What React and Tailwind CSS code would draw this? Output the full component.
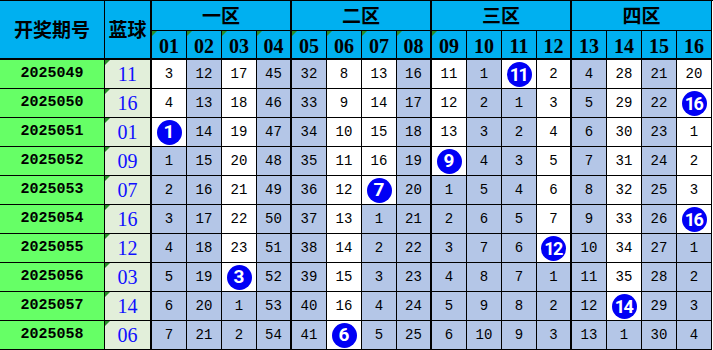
import React from 'react';

const rows = [
  { id: '2025049', blue: '11', nums: [3, 12, 17, 45, 32, 8, 13, 16, 11, 1, 'B11', 2, 4, 28, 21, 20] },
  { id: '2025050', blue: '16', nums: [4, 13, 18, 46, 33, 9, 14, 17, 12, 2, 1, 3, 5, 29, 22, 'B16'] },
  { id: '2025051', blue: '01', nums: ['B1', 14, 19, 47, 34, 10, 15, 18, 13, 3, 2, 4, 6, 30, 23, 1] },
  { id: '2025052', blue: '09', nums: [1, 15, 20, 48, 35, 11, 16, 19, 'B9', 4, 3, 5, 7, 31, 24, 2] },
  { id: '2025053', blue: '07', nums: [2, 16, 21, 49, 36, 12, 'B7', 20, 1, 5, 4, 6, 8, 32, 25, 3] },
  { id: '2025054', blue: '16', nums: [3, 17, 22, 50, 37, 13, 1, 21, 2, 6, 5, 7, 9, 33, 26, 'B16'] },
  { id: '2025055', blue: '12', nums: [4, 18, 23, 51, 38, 14, 2, 22, 3, 7, 6, 'B12', 10, 34, 27, 1] },
  { id: '2025056', blue: '03', nums: [5, 19, 'B3', 52, 39, 15, 3, 23, 4, 8, 7, 1, 11, 35, 28, 2] },
  { id: '2025057', blue: '14', nums: [6, 20, 1, 53, 40, 16, 4, 24, 5, 9, 8, 2, 12, 'B14', 29, 3] },
  { id: '2025058', blue: '06', nums: [7, 21, 2, 54, 41, 'B6', 5, 25, 6, 10, 9, 3, 13, 1, 30, 4] },
];

const zones = ['一区', '二区', '三区', '四区'];
const cols = ['01', '02', '03', '04', '05', '06', '07', '08', '09', '10', '11', '12', '13', '14', '15', '16'];

// last row (index) where each column was hit; cells up to it stay white
const lastHit = cols.map((_, c) => {
  let last = -1;
  rows.forEach((r, i) => {
    if (typeof r.nums[c] === 'string') last = i;
  });
  return last;
});

function Tri() {
  return (
    <span className="absolute left-0 top-0 w-0 h-0 border-t-[5px] border-r-[5px] border-t-[#2a8f2a] border-r-transparent" />
  );
}

function Ball({ value }) {
  const two = value.length > 1;
  return (
    <div
      className={`w-[25px] h-[25px] rounded-full bg-[#0000f5] text-white font-bold flex items-center justify-center font-['Roboto',sans-serif] ${
        two ? 'text-[18px] tracking-[-1.5px] pr-[1px]' : 'text-[19px]'
      }`}
    >
      {value}
    </div>
  );
}

export default function App() {
  const cjk = "font-['Noto_Sans_CJK_SC',sans-serif] font-bold text-[19px] text-black";

  return (
    <div className="w-[713px] h-[350px] bg-white overflow-hidden">
      <div className="grid grid-cols-[105px_47px_repeat(16,35px)] grid-rows-[30px_29px_repeat(10,29px)] border-t border-black">
        <div className={`row-span-2 flex items-center justify-center bg-[#00b0f0] border-r border-b-2 border-black ${cjk}`}>
          开奖期号
        </div>
        <div className={`row-span-2 flex items-center justify-center bg-[#00b0f0] border-r-2 border-b-2 border-black ${cjk}`}>
          蓝球
        </div>
        {zones.map((z, i) => (
          <div
            key={z}
            className={`col-span-4 flex items-center justify-center bg-[#00b0f0] border-b border-black ${cjk} ${
              i < 3 ? 'border-r-2' : 'border-r'
            }`}
          >
            {z}
          </div>
        ))}
        {cols.map((c, i) => (
          <div
            key={c}
            className={`relative flex items-center justify-center pt-[3px] bg-[#00b0f0] border-b-2 border-black font-['Liberation_Serif',serif] font-bold text-[20px] text-black ${
              i === 3 || i === 7 || i === 11 ? 'border-r-2' : 'border-r'
            }`}
          >
            {i < 9 ? <Tri /> : null}
            {c}
          </div>
        ))}

        {rows.map((r, ri) => (
          <React.Fragment key={r.id}>
            <div className="flex items-center justify-center bg-[#66ff66] border-r border-b border-black font-['Liberation_Mono',monospace] font-bold text-[15px] text-black">
              {r.id}
            </div>
            <div className="relative flex items-center justify-center bg-[#e2efda] border-r-2 border-b border-black font-['Liberation_Serif',serif] text-[20px] text-[#1010ff]">
              <Tri />
              {r.blue}
            </div>
            {r.nums.map((n, ci) => {
              const white = ri <= lastHit[ci];
              const isBall = typeof n === 'string';
              return (
                <div
                  key={ci}
                  className={`flex items-center justify-center border-b border-black font-['Liberation_Mono',monospace] text-[14px] text-black ${
                    white ? 'bg-white' : 'bg-[#b4c6e7]'
                  } ${ci === 3 || ci === 7 || ci === 11 ? 'border-r-2' : 'border-r'}`}
                >
                  {isBall ? <Ball value={n.slice(1)} /> : n}
                </div>
              );
            })}
          </React.Fragment>
        ))}
      </div>
    </div>
  );
}
